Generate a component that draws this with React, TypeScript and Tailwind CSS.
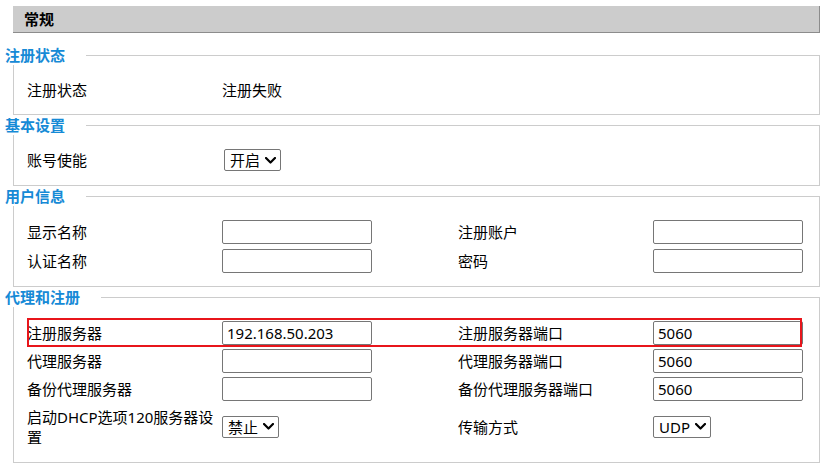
import React from "react";

const FONT = { fontFamily: '"Noto Sans", "Noto Sans CJK SC", sans-serif' };

function Chevron() {
  return (
    <svg width="11" height="7" viewBox="0 0 11 7" className="shrink-0">
      <polyline points="1,1 5.5,5.5 10,1" fill="none" stroke="#000" strokeWidth="2.2" strokeLinecap="round" strokeLinejoin="round" />
    </svg>
  );
}

function Select({ value, className = "" }: { value: string; className?: string }) {
  return (
    <div className={`flex h-[22px] items-center gap-[5px] rounded-[2px] border border-[#767676] bg-white pl-[5px] pr-[4px] text-[15px] leading-[20px] text-black ${className}`}>
      <span>{value}</span>
      <Chevron />
    </div>
  );
}

function Input({ value = "" }: { value?: string }) {
  return (
    <div className="flex h-[24px] w-[150px] items-center rounded-[2px] border border-[#767676] bg-white px-[4px] text-[15px] leading-[20px] text-black">
      {value}
    </div>
  );
}

function Section({ title, bodyClass, children }: { title: string; bodyClass: string; children: React.ReactNode }) {
  return (
    <div className="w-[820px]">
      <div className="flex h-[20px]">
        <div className="pl-[5px] text-[15px] font-bold leading-[20px] text-[#168ad6]">{title}</div>
        <div className="ml-[21px] h-[10px] flex-1 self-end border-r border-t border-[#cccccc]" />
      </div>
      <div className={`ml-[13px] border-b border-l border-r border-[#cccccc] pl-[13px] ${bodyClass}`}>{children}</div>
    </div>
  );
}

function Row({ h, children, className = "" }: { h: string; children: React.ReactNode; className?: string }) {
  return (
    <div className={`grid grid-cols-[195px_236px_195px_150px] items-center ${h} ${className}`}>{children}</div>
  );
}

export default function App() {
  return (
    <div className="h-[465px] w-[821px] bg-white text-[15px] leading-[20px] text-black" style={FONT}>
      <div className="ml-[13px] mt-[6px] flex h-[27px] w-[807px] items-center border-b border-r border-[#8c8c8c] bg-[#cccccc] pl-[11px] text-[15px] font-bold">
        常规
      </div>

      <div className="mt-[12px]">
        <Section title="注册状态" bodyClass="pt-[11px] pb-[10px]">
          <Row h="h-[28px]">
            <div>注册状态</div>
            <div>注册失败</div>
          </Row>
        </Section>

        <Section title="基本设置" bodyClass="pt-[11px] pb-[11px]">
          <Row h="h-[28px]">
            <div>账号使能</div>
            <div className="flex">
              <Select value="开启" className="ml-[2px]" />
            </div>
          </Row>
        </Section>

        <Section title="用户信息" bodyClass="pt-[11px] pb-[11px]">
          <Row h="h-[29px]">
            <div>显示名称</div>
            <Input />
            <div>注册账户</div>
            <Input />
          </Row>
          <Row h="h-[29px]">
            <div>认证名称</div>
            <Input />
            <div>密码</div>
            <Input />
          </Row>
        </Section>

        <Section title="代理和注册" bodyClass="pt-[12px] pb-[12px]">
          <div className="relative">
            <Row h="h-[28px]">
              <div>注册服务器</div>
              <Input value="192.168.50.203" />
              <div>注册服务器端口</div>
              <Input value="5060" />
            </Row>
            <div className="pointer-events-none absolute left-0 top-[-1px] h-[29px] w-[775px] border-2 border-[#e8151b]" />
          </div>
          <Row h="h-[28px]">
            <div>代理服务器</div>
            <Input />
            <div>代理服务器端口</div>
            <Input value="5060" />
          </Row>
          <Row h="h-[28px]">
            <div>备份代理服务器</div>
            <Input />
            <div>备份代理服务器端口</div>
            <Input value="5060" />
          </Row>
          <Row h="h-[47px]">
            <div>启动DHCP选项120服务器设置</div>
            <div className="flex">
              <Select value="禁止" />
            </div>
            <div>传输方式</div>
            <div className="flex">
              <Select value="UDP" />
            </div>
          </Row>
        </Section>
      </div>
    </div>
  );
}
